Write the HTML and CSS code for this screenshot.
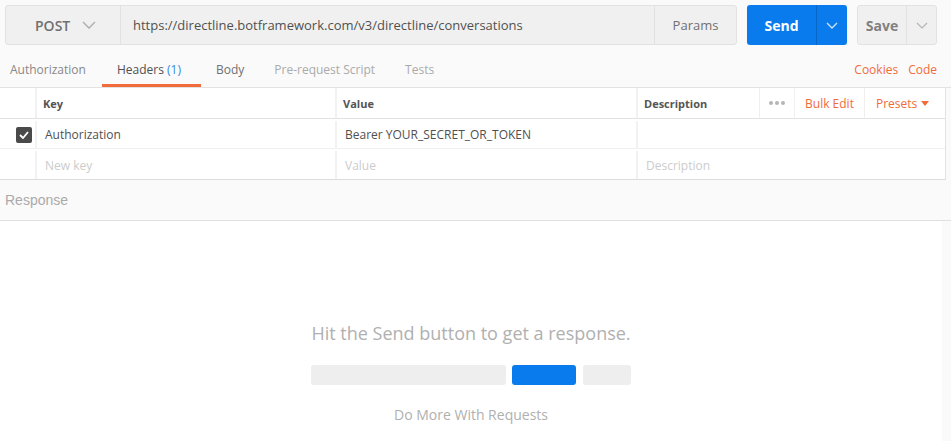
FILE: index.html
```html
<!DOCTYPE html>
<html>
<head>
<meta charset="utf-8">
<link rel="stylesheet" href="styles.css">
</head>
<body>
<div class="topbar">
  <div class="urlgroup">
    <div class="method">POST <svg class="chev" width="14" height="8" viewBox="0 0 14 8"><path d="M1 1l6 6 6-6" fill="none" stroke="#aaa" stroke-width="1.3"/></svg></div>
    <div class="url">https://directline.botframework.com/v3/directline/conversations</div>
    <div class="params">Params</div>
  </div>
  <div class="send">
    <div class="send-main">Send</div>
    <div class="send-drop"><svg width="12" height="7" viewBox="0 0 12 7"><path d="M1 1l5 5 5-5" fill="none" stroke="#cfe4fb" stroke-width="1.3"/></svg></div>
  </div>
  <div class="save">
    <div class="save-main">Save</div>
    <div class="save-drop"><svg width="12" height="7" viewBox="0 0 12 7"><path d="M1 1l5 5 5-5" fill="none" stroke="#b5b5b5" stroke-width="1.2"/></svg></div>
  </div>
</div>

<div class="tabs">
  <div class="tab first">Authorization</div>
  <div class="tab active">Headers <span class="count">(1)</span></div>
  <div class="tab body-tab">Body</div>
  <div class="tab light">Pre-request Script</div>
  <div class="tab light">Tests</div>
  <div class="spacer"></div>
  <div class="link">Cookies</div>
  <div class="link">Code</div>
</div>

<div class="table">
  <div class="row head">
    <div class="c-check"></div>
    <div class="c-key">Key</div>
    <div class="c-val">Value</div>
    <div class="c-desc">Description</div>
    <div class="c-dots"><span></span><span></span><span></span></div>
    <div class="c-bulk">Bulk Edit</div>
    <div class="c-presets">Presets <svg width="8" height="5" viewBox="0 0 8 5"><path d="M0 0h8L4 5z" fill="#f26b3a"/></svg></div>
  </div>
  <div class="row data">
    <div class="c-check"><span class="checkbox"><svg width="10" height="8" viewBox="0 0 10 8"><path d="M1 4l3 3 5-6" fill="none" stroke="#fff" stroke-width="1.8"/></svg></span></div>
    <div class="c-key">Authorization</div>
    <div class="c-val">Bearer YOUR_SECRET_OR_TOKEN</div>
    <div class="c-desc wide"></div>
  </div>
  <div class="row data last">
    <div class="c-check"></div>
    <div class="c-key ph">New key</div>
    <div class="c-val ph">Value</div>
    <div class="c-desc wide ph">Description</div>
  </div>
</div>

<div class="response-head">Response</div>

<div class="response-body">
  <div class="empty-title">Hit the Send button to get a response.</div>
  <div class="bars">
    <div class="bar b1"></div>
    <div class="bar b2"></div>
    <div class="bar b3"></div>
  </div>
  <div class="more">Do More With Requests</div>
</div>
</body>
</html>
```
FILE: styles.css
```css
html, body {
  margin: 0;
  padding: 0;
}
body {
  width: 951px;
  height: 441px;
  overflow: hidden;
  background: #fafafa;
  font-family: "Open Sans", "DejaVu Sans", sans-serif;
  color: #505050;
  display: flex;
  flex-direction: column;
}
.topbar {
  display: flex;
  padding: 5px 0 0 5px;
  height: 45px;
  flex: none;
  box-sizing: border-box;
}
.urlgroup {
  display: flex;
  width: 732px;
  height: 40px;
  box-sizing: border-box;
  border: 1px solid #e2e2e2;
  border-radius: 3px;
  background: #f0f0f0;
}
.method {
  width: 115px;
  box-sizing: border-box;
  border-right: 1px solid #e2e2e2;
  display: flex;
  align-items: center;
  padding-left: 29px;
  font-size: 14px;
  font-weight: 600;
  color: #707070;
}
.method .chev {
  margin-left: 12px;
}
.url {
  flex: 1;
  display: flex;
  align-items: center;
  padding-left: 12px;
  font-size: 13px;
  color: #505050;
}
.params {
  width: 82px;
  box-sizing: border-box;
  border-left: 1px solid #e2e2e2;
  display: flex;
  align-items: center;
  justify-content: center;
  font-size: 13px;
  color: #707070;
}
.send {
  display: flex;
  margin-left: 10px;
  width: 100px;
  height: 40px;
  border-radius: 3px;
  background: #097bed;
  overflow: hidden;
}
.send-main {
  width: 69px;
  display: flex;
  align-items: center;
  justify-content: center;
  color: #fff;
  font-weight: 700;
  font-size: 14px;
}
.send-drop {
  flex: 1;
  border-left: 1px solid #0866c6;
  display: flex;
  align-items: center;
  justify-content: center;
}
.save {
  display: flex;
  margin-left: 10px;
  width: 80px;
  height: 40px;
  box-sizing: border-box;
  border: 1px solid #e2e2e2;
  border-radius: 3px;
  background: #f0f0f0;
}
.save-main {
  width: 48px;
  display: flex;
  align-items: center;
  justify-content: center;
  color: #808080;
  font-weight: 700;
  font-size: 14px;
}
.save-drop {
  flex: 1;
  border-left: 1px solid #e2e2e2;
  display: flex;
  align-items: center;
  justify-content: center;
}
.tabs {
  display: flex;
  flex: none;
  margin-top: 7px;
  height: 36px;
  box-sizing: border-box;
  border-bottom: 1px solid #e2e2e2;
  font-size: 12px;
}
.tab {
  padding: 0 15px;
  line-height: 36px;
  color: #888;
  white-space: nowrap;
}
.tab.first {
  padding-left: 10px;
  padding-right: 16px;
}
.tab.active {
  color: #505050;
  padding-right: 20px;
  line-height: 36px;
  height: 35px;
  box-sizing: border-box;
  border-bottom: 3px solid #f26b3a;
}
.count {
  color: #2e8ae6;
}
.tab.body-tab {
  color: #707070;
}
.tab.light {
  color: #aaa;
}
.spacer {
  flex: 1;
}
.link {
  line-height: 36px;
  color: #f26b3a;
  margin-right: 10px;
}
.link:last-child {
  margin-right: 14px;
}
.table {
  flex: none;
  width: 946px;
  background: #fff;
  border-right: 1px solid #e2e2e2;
  box-sizing: border-box;
}
.row {
  display: flex;
  height: 30px;
  box-sizing: border-box;
  border-bottom: 1px solid #e2e2e2;
  font-size: 12px;
}
.row.head {
  height: 31px;
  font-size: 11px;
  font-weight: 700;
  color: #555;
}
.row.data {
  border-bottom-color: #f0f0f0;
  padding-top: 2px;
}
.row.data.last {
  height: 31px;
  border-bottom: 1px solid #dcdcdc;
}
.row > div {
  display: flex;
  align-items: center;
  box-sizing: border-box;
}
.c-check {
  width: 37px;
  border-right: 2px solid #f2f2f2;
  padding-left: 16px;
}
.c-key {
  width: 300px;
  border-right: 2px solid #f2f2f2;
  padding-left: 8px;
}
.c-val {
  width: 301px;
  border-right: 2px solid #f2f2f2;
  padding-left: 8px;
}
.head .c-key, .head .c-val {
  padding-left: 6px;
}
.c-desc {
  width: 121px;
  padding-left: 6px;
}
.c-desc.wide {
  flex: 1;
  padding-left: 8px;
}
.c-dots {
  width: 36px;
  border-left: 1px solid #f0f0f0;
  border-right: 1px solid #f0f0f0;
  justify-content: center;
  gap: 2px;
}
.c-dots span {
  width: 4px;
  height: 4px;
  border-radius: 50%;
  background: #b5b5b5;
}
.c-bulk {
  width: 70px;
  border-right: 1px solid #f0f0f0;
  justify-content: center;
  font-weight: 400;
  font-size: 12px;
  color: #f26b3a;
}
.c-presets {
  flex: 1;
  padding-left: 11px;
  font-weight: 400;
  font-size: 12px;
  color: #f26b3a;
  gap: 4px;
}
.checkbox {
  width: 16px;
  height: 16px;
  border-radius: 2px;
  background: #4a4a4a;
  display: flex;
  align-items: center;
  justify-content: center;
}
.ph {
  color: #cccccc;
}
.response-head {
  flex: none;
  height: 41px;
  box-sizing: border-box;
  border-bottom: 1px solid #e0e0e0;
  padding-left: 5px;
  line-height: 40px;
  font-family: "Liberation Sans", Arial, sans-serif;
  font-size: 14px;
  color: #aaa;
}
.response-body {
  flex: 1;
  width: 942px;
  background: #fff;
  display: flex;
  flex-direction: column;
  align-items: center;
  padding-top: 100px;
  box-sizing: border-box;
}
.empty-title {
  font-size: 18px;
  color: #b0b0b0;
  line-height: 24px;
}
.bars {
  display: flex;
  margin-top: 20px;
  height: 20px;
}
.bar {
  height: 20px;
  border-radius: 3px;
  background: #eeeeee;
}
.b1 { width: 195px; }
.b2 { width: 64px; margin-left: 6px; background: #097bed; }
.b3 { width: 48px; margin-left: 7px; }
.more {
  margin-top: 20px;
  font-size: 14px;
  color: #b0b0b0;
}
```
